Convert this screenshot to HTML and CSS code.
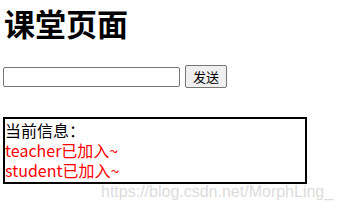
FILE: index.html
```html
<!DOCTYPE html>
<html lang="zh">

<head>
    <meta charset="UTF-8" />
    <title>课堂页面</title>
    <link rel="stylesheet" href="styles.css">
</head>

<body>
    <h1 class="title">课堂页面</h1>
    <form class="send-form">
        <input type="text" class="msg-input" />
        <button type="button" class="send-btn">发送</button>
    </form>

    <div class="info-box">
        <div class="info-head">当前信息：</div>
        <div class="info-line">teacher已加入~</div>
        <div class="info-line">student已加入~</div>
    </div>

    <span class="watermark">https://blog.csdn.net/MorphLing_</span>
</body>

</html>
```

FILE: styles.css
```css
* {
    margin: 0;
    padding: 0;
    box-sizing: border-box;
}

body {
    font-family: "Noto Sans CJK SC", "Noto Sans", sans-serif;
    font-size: 16px;
    color: #000;
    background: #fff;
    padding: 0 3px;
    position: relative;
    height: 212px;
}

.title {
    font-size: 31px;
    font-weight: bold;
    line-height: 44px;
    padding-top: 1px;
    padding-left: 1px;
}

.send-form {
    display: flex;
    align-items: center;
    gap: 5px;
    margin-top: 20px;
}

.msg-input {
    width: 177px;
    height: 20px;
    border: 1px solid #767676;
    border-radius: 2px;
}

.send-btn {
    width: 42px;
    height: 23px;
    font-family: "Noto Sans CJK SC", sans-serif;
    font-size: 13px;
    background: #efefef;
    border: 1px solid #767676;
    border-radius: 2px;
    color: #000;
}

.info-box {
    width: 304px;
    margin-top: 29px;
    border: 2px solid #000;
    line-height: 20px;
    padding-top: 1px;
    padding-bottom: 2px;
}

.info-line {
    color: #f00;
}

.watermark {
    position: absolute;
    left: 101px;
    top: 183px;
    font-family: "Liberation Sans", sans-serif;
    font-size: 16px;
    color: #dcdcdc;
}
```
